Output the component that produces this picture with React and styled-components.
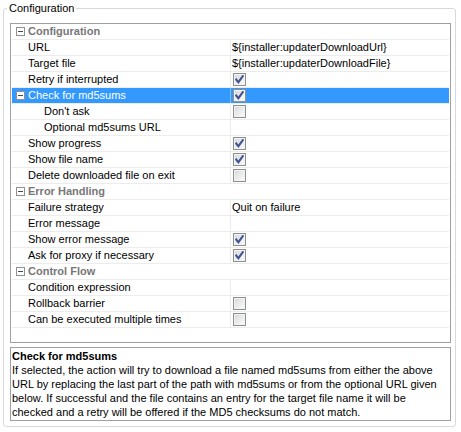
import React from 'react';
import styled, { createGlobalStyle } from 'styled-components';

const GlobalStyle = createGlobalStyle`
  html, body { margin: 0; padding: 0; background: #fff; }
  body {
    font-family: "Liberation Sans", Arial, sans-serif;
    font-size: 11px;
    color: #000;
  }
`;

const Group = styled.fieldset`
  margin: 0 5px 0 3px;
  padding: 6px 4px 5px 6px;
  border: 1px solid #d5dadf;
  border-radius: 3px;
  min-width: 0;
`;

const Title = styled.legend`
  padding: 0 2px;
  margin-left: -3px;
  line-height: 17px;
  font-size: 11px;
  color: #000;
`;

const Stack = styled.div`
  display: flex;
  flex-direction: column;
  gap: 4px;
`;

const Sheet = styled.div`
  box-sizing: border-box;
  height: 320px;
  border: 1px solid #a0a0a0;
  padding: 0 1px;
  background: #fff;
`;

const Row = styled.div`
  display: grid;
  grid-template-columns: ${p => (p.$header ? '1fr' : '218px 1fr')};
  height: 15px;
  line-height: 15px;
  border-bottom: 1px solid #ececec;
  background: ${p => (p.$selected ? '#3399ff' : 'transparent')};
  color: ${p => (p.$selected ? '#fff' : p.$header ? '#777' : '#000')};
  font-weight: ${p => (p.$header ? 'bold' : 'normal')};
`;

const NameCell = styled.div`
  display: flex;
  align-items: center;
  gap: 3px;
  padding-left: ${p => (p.$toggle ? 4 : 16 * p.$level)}px;
  white-space: nowrap;
  overflow: hidden;
`;

const ValueCell = styled.div`
  display: flex;
  align-items: center;
  padding-left: 1px;
  border-left: 1px solid ${p => (p.$selected ? '#7fbfff' : '#ececec')};
  white-space: nowrap;
  overflow: hidden;
`;

const Toggle = styled.span`
  position: relative;
  box-sizing: border-box;
  width: 9px;
  height: 9px;
  flex: none;
  border: 1px solid #919191;
  background: #fff;
  &::after {
    content: '';
    position: absolute;
    left: 1px;
    top: 3px;
    width: 5px;
    height: 1px;
    background: #4a4a4a;
  }
`;

const Box = styled.span`
  box-sizing: border-box;
  width: 13px;
  height: 13px;
  margin-left: 1px;
  flex: none;
  display: flex;
  align-items: center;
  justify-content: center;
  border: 1px solid #8e8f8f;
  background: linear-gradient(135deg, #d2d4d8 0%, #eceded 55%, #fbfbfb 100%);
  box-shadow: inset 0 0 0 1px #f3f3f3;
`;

const Desc = styled.div`
  box-sizing: border-box;
  height: 74px;
  border: 1px solid #a0a0a0;
  padding: 1px 1px;
  line-height: 14px;
  white-space: nowrap;
  overflow: hidden;
`;

const DescTitle = styled.div`
  font-weight: bold;
`;

function Check({ checked }) {
  return (
    <Box>
      {checked && (
        <svg width="9" height="9" viewBox="0 0 9 9">
          <path d="M1.3 4.6 L3.4 7.2 L7.8 1.2" fill="none" stroke="#3f5490" strokeWidth="2.1" strokeLinecap="square" />
        </svg>
      )}
    </Box>
  );
}

const rows = [
  { header: true, name: 'Configuration' },
  { name: 'URL', value: '${installer:updaterDownloadUrl}' },
  { name: 'Target file', value: '${installer:updaterDownloadFile}' },
  { name: 'Retry if interrupted', check: true },
  { name: 'Check for md5sums', check: true, toggle: true, selected: true },
  { name: "Don't ask", check: false, level: 2 },
  { name: 'Optional md5sums URL', level: 2, value: '' },
  { name: 'Show progress', check: true },
  { name: 'Show file name', check: true },
  { name: 'Delete downloaded file on exit', check: false },
  { header: true, name: 'Error Handling' },
  { name: 'Failure strategy', value: 'Quit on failure' },
  { name: 'Error message', value: '' },
  { name: 'Show error message', check: true },
  { name: 'Ask for proxy if necessary', check: true },
  { header: true, name: 'Control Flow' },
  { name: 'Condition expression', value: '' },
  { name: 'Rollback barrier', check: false },
  { name: 'Can be executed multiple times', check: false },
];

export default function App() {
  return (
    <>
      <GlobalStyle />
      <Group>
        <Title>Configuration</Title>
        <Stack>
          <Sheet>
            {rows.map((r, i) =>
              r.header ? (
                <Row key={i} $header>
                  <NameCell $toggle>
                    <Toggle />
                    {r.name}
                  </NameCell>
                </Row>
              ) : (
                <Row key={i} $selected={r.selected}>
                  <NameCell $toggle={r.toggle} $level={r.level || 1}>
                    {r.toggle && <Toggle />}
                    {r.name}
                  </NameCell>
                  <ValueCell $selected={r.selected}>
                    {'check' in r ? <Check checked={r.check} /> : r.value}
                  </ValueCell>
                </Row>
              )
            )}
          </Sheet>
          <Desc>
            <DescTitle>Check for md5sums</DescTitle>
            If selected, the action will try to download a file named md5sums from either the above
            <br />
            URL by replacing the last part of the path with md5sums or from the optional URL given
            <br />
            below. If successful and the file contains an entry for the target file name it will be
            <br />
            checked and a retry will be offered if the MD5 checksums do not match.
          </Desc>
        </Stack>
      </Group>
    </>
  );
}
